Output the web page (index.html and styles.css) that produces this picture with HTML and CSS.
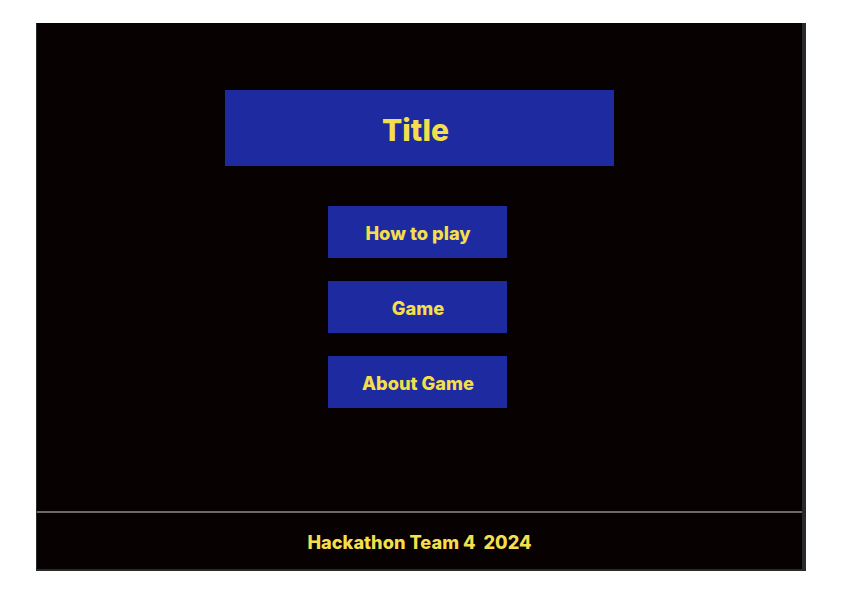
FILE: index.html
```html
<!DOCTYPE html>
<html lang="en">
<head>
<meta charset="utf-8">
<title>Title</title>
<link rel="stylesheet" href="styles.css">
</head>
<body>
<div class="screen">
  <main class="main">
    <div class="title-box"><h1 class="title">Title</h1></div>
    <nav class="menu">
      <a class="btn" href="#">How to play</a>
      <a class="btn" href="#">Game</a>
      <a class="btn" href="#">About Game</a>
    </nav>
  </main>
  <footer class="footer">Hackathon Team 4&nbsp; 2024</footer>
</div>
</body>
</html>
```
FILE: styles.css
```css
html, body {
  margin: 0;
  padding: 0;
  background: #ffffff;
}
body {
  font-family: Inter, "Noto Sans", sans-serif;
}
.screen {
  margin: 23px 0 0 36px;
  width: 765px;
  height: 546px;
  background: #070102;
  border-left: 1px solid #2b2a2b;
  border-right: 4px solid #2b2a2b;
  border-bottom: 2px solid #2b2a2b;
  display: flex;
  flex-direction: column;
}
.main {
  height: 488px;
  display: flex;
  flex-direction: column;
  align-items: center;
  padding-top: 67px;
  box-sizing: border-box;
}
.title-box {
  width: 389px;
  height: 76px;
  background: #1e2aa0;
  display: flex;
  align-items: center;
  justify-content: center;
  padding-right: 8px;
  box-sizing: border-box;
}
.title {
  margin: 0;
  color: #f3df4c;
  font-size: 30px;
  font-weight: 800;
  line-height: 1;
  padding-top: 3px;
}
.menu {
  margin-top: 40px;
  display: flex;
  flex-direction: column;
  gap: 23px;
  margin-right: 4px;
}
.btn {
  width: 179px;
  height: 52px;
  background: #1e2aa0;
  color: #f3df4c;
  text-decoration: none;
  font-size: 18.3px;
  font-weight: 800;
  display: flex;
  align-items: center;
  justify-content: center;
  padding-top: 2px;
  padding-left: 1px;
  box-sizing: border-box;
}
.footer {
  flex: 1;
  border-top: 2px solid #6e6a6b;
  display: flex;
  align-items: center;
  justify-content: center;
  color: #f3df4c;
  font-size: 18.2px;
  font-weight: 800;
  padding-top: 2px;
}
```
